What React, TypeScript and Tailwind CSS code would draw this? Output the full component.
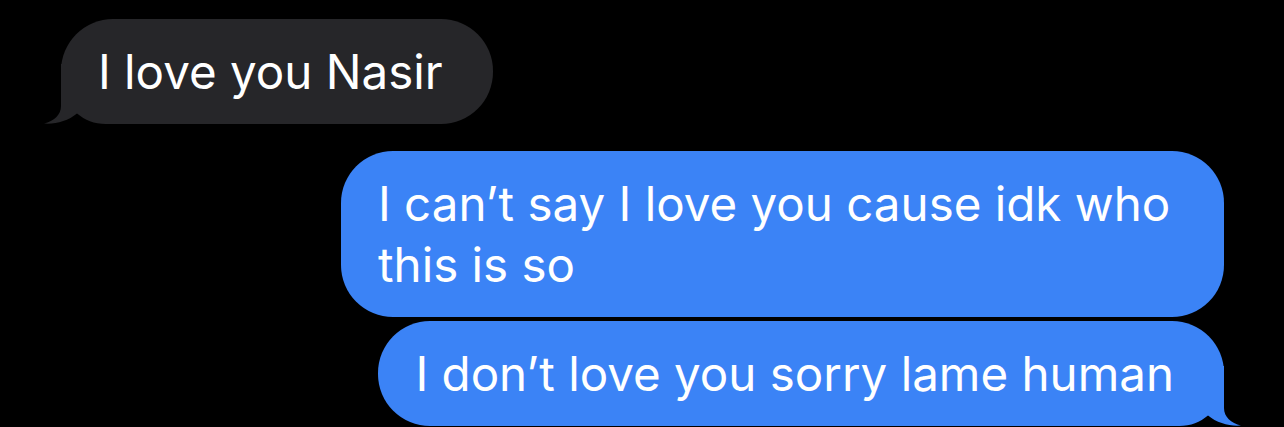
import type { ReactNode } from "react";

type Side = "in" | "out";

// Little curled tail drawn under the last bubble of a run
function Tail({ side, color }: { side: Side; color: string }) {
  const pos =
    side === "in"
      ? "left-[-17px] bottom-0"
      : "right-[-17px] bottom-0 -scale-x-100";
  return (
    <svg
      className={`absolute ${pos} pointer-events-none`}
      width="77"
      height="60"
      viewBox="0 0 77 60"
      fill={color}
    >
      <path d="M17 0 L17 42 C17 51 10 57 0 59.5 C11 60.5 24 57 33 49.5 C41 56 50 60 62 60 L77 60 L77 0 Z" />
    </svg>
  );
}

function Bubble({
  side,
  tail,
  children,
}: {
  side: Side;
  tail?: boolean;
  children: ReactNode;
}) {
  const color = side === "in" ? "#262629" : "#3b83f6";
  return (
    <div
      className={`relative rounded-[52px] py-[22px] pl-[37px] pr-[50px] text-[47.5px] leading-[61px] text-white ${
        side === "in" ? "bg-[#262629]" : "bg-[#3b83f6] max-w-[883px]"
      }`}
    >
      {tail && <Tail side={side} color={color} />}
      <span className="relative">{children}</span>
    </div>
  );
}

export default function App() {
  return (
    <div className="h-[427px] w-full overflow-hidden bg-black px-[60px] pt-[19px] font-['Inter','Noto_Sans',sans-serif]">
      <div className="flex justify-start pl-px">
        <Bubble side="in" tail>
          I love you Nasir
        </Bubble>
      </div>

      <div className="mt-[27px] flex flex-col items-end gap-[4px]">
        <Bubble side="out">
          I can’t say I love you cause idk who this is so
        </Bubble>
        <Bubble side="out" tail>
          I don’t love you sorry lame human
        </Bubble>
      </div>
    </div>
  );
}
